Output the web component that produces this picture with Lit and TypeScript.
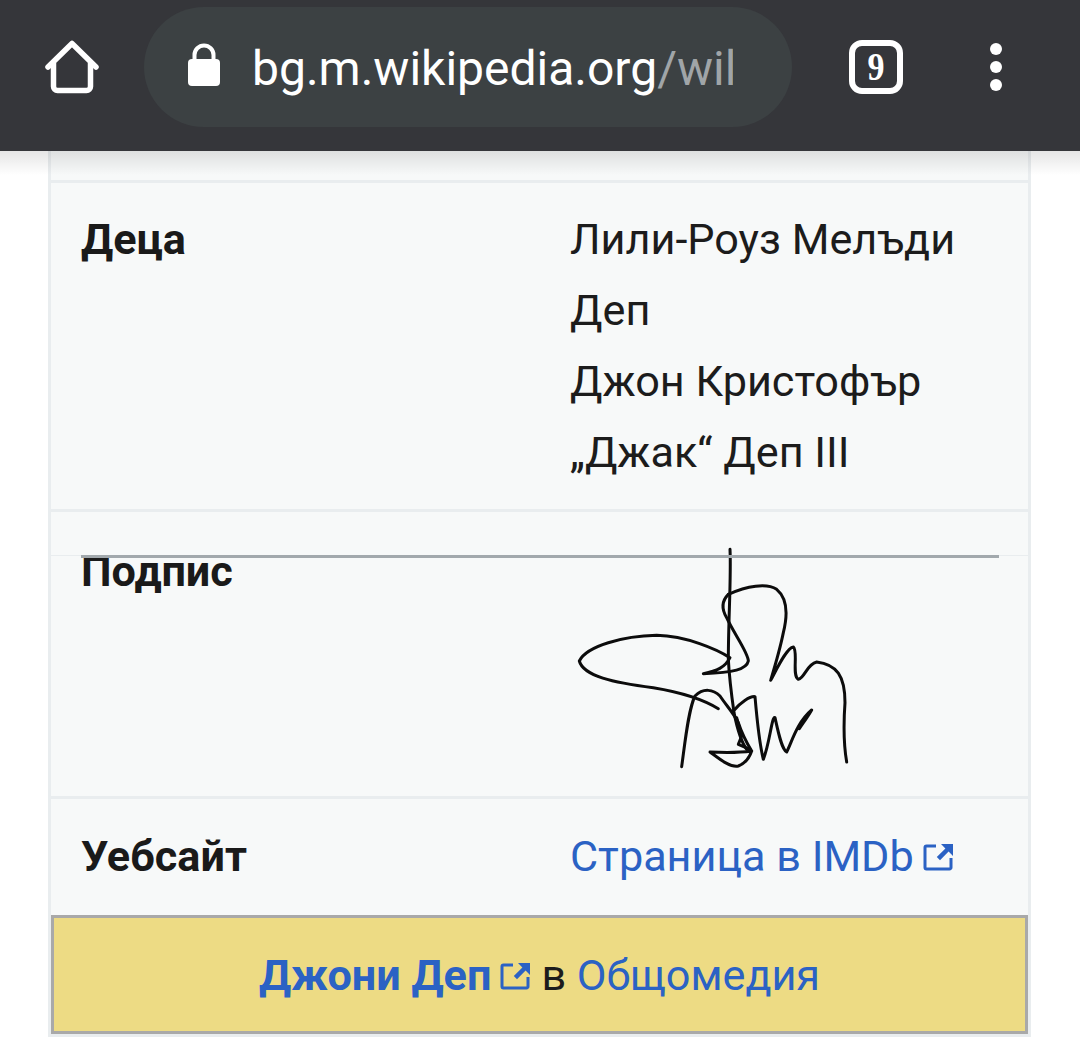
import { LitElement, html, css, svg } from "lit";
import { customElement } from "lit/decorators.js";

const extIcon = svg`<path d="M13 4H3.500A1.500 1.500 0 0 0 2 5.500v20A1.500 1.500 0 0 0 3.500 27h23a1.500 1.500 0 0 0 1.500-1.500V16" fill="none" stroke="currentColor" stroke-width="3"/><path d="M18 2h12v12l-4.400-4.400-8.600 8.600-3.200-3.200 8.600-8.600z" fill="currentColor"/>`;

@customElement("app-root")
export class AppRoot extends LitElement {
  static styles = css`
    :host { display: block; position: relative; width: 1080px; height: 1063px; overflow: hidden; background: #fff; font-family: Roboto, "Noto Sans", sans-serif; color: #1c1c1c; }
    .toolbar { height: 151px; background: #35363a; display: flex; align-items: flex-start; box-sizing: border-box; position: relative; z-index: 2; }
    .home { width: 60px; height: 60px; margin: 38px 0 0 42px; flex: none; }
    .pill { width: 648px; height: 120px; margin: 7px 0 0 42px; flex: none; border-radius: 60px; background: #3c4143; display: flex; align-items: center; box-sizing: border-box; padding: 0 0 2px 44px; }
    .lock { width: 32px; height: 44px; flex: none; margin-bottom: 3px; }
    .url { margin-left: 32px; width: 481px; overflow: hidden; white-space: nowrap; font-size: 48px; color: #fff; line-height: 60px; padding-top: 6px; }
    .url span { color: #a0a5a8; }
    .tabs { width: 54px; height: 54px; box-sizing: border-box; margin: 40px 0 0 57px; border: 6px solid #fff; border-radius: 13px; display: flex; align-items: center; justify-content: center; color: #fff; font: bold 40px/1 "Liberation Serif", serif; flex: none; }
    .tabs span { display: block; transform: scaleX(0.85); }
    .dots { display: flex; flex-direction: column; gap: 6px; margin: 43px 0 0 87px; flex: none; }
    .dots i { display: block; width: 12px; height: 12px; border-radius: 50%; background: #fff; }
    .shade { position: absolute; left: 0; right: 0; top: 151px; height: 24px; background: linear-gradient(rgba(0,0,0,.1), rgba(0,0,0,0)); z-index: 1; pointer-events: none; }
    .box { margin-left: 48px; width: 983px; box-sizing: border-box; border: 3px solid #e9edef; border-top: 0; background: #f7f9f9; position: relative; }
    .row { border-bottom: 3px solid #e9edef; display: grid; grid-template-columns: 489px 429px; padding-left: 30px; font-size: 43.2px; line-height: 71px; }
    .top { height: 29px; padding: 0; }
    .th { font-weight: 700; color: #1a1a1a; }
    .kids { padding-top: 21px; padding-bottom: 21px; }
    .gap { height: 43px; padding: 0; border-bottom: 1px solid #e9edef; }
    .sign { height: 240px; position: relative; }
    .sign .th { line-height: 32px; }
    .rule { position: absolute; left: 30px; width: 918px; top: -1px; height: 3px; background: #a2a9ad; }
    .sig { display: block; width: 310px; height: 245px; margin: -20px 0 0 -10px; position: relative; }
    .site { padding-top: 21px; padding-bottom: 20px; line-height: 73px; height: 115px; box-sizing: border-box; border-bottom: 0; }
    a { color: #2b62c4; text-decoration: none; }
    .ext { display: inline-block; width: 32px; height: 30px; vertical-align: -1px; margin-left: 9px; color: #2b62c4; }
    .commons { box-sizing: border-box; height: 119px; margin-top: 1px; border: 3px solid #a9a9a9; background: #eddb84; text-align: center; font-size: 43.2px; line-height: 115px; color: #1c1c1c; }
    .commons b { font-weight: 700; }
    .commons .ext { margin-left: 9px; margin-right: 9px; }
  `;

  render() {
    return html`
      <div class="toolbar">
        <svg class="home" viewBox="0 0 60 60"><path d="M6 29 30 5.500 54 29" fill="none" stroke="#fff" stroke-width="5.500" stroke-linecap="round" stroke-linejoin="round"/><path d="M11.500 25v23.500a4 4 0 0 0 4 4h29a4 4 0 0 0 4-4V25" fill="none" stroke="#fff" stroke-width="5.500"/></svg>
        <div class="pill">
          <svg class="lock" viewBox="0 0 32 44"><path d="M6.500 18v-6a9.500 9.500 0 0 1 19 0v6" fill="none" stroke="#fff" stroke-width="4"/><rect x="0" y="16" width="32" height="27" rx="4" fill="#fff"/></svg>
          <div class="url">bg.m.wikipedia.org<span>/wil</span></div>
        </div>
        <div class="tabs"><span>9</span></div>
        <div class="dots"><i></i><i></i><i></i></div>
      </div>
      <div class="shade"></div>
      <div class="box">
        <div class="row top"></div>
        <div class="row kids">
          <div class="th">Деца</div>
          <div>Лили-Роуз Мелъди Деп<br />Джон Кристофър „Джак“ Деп III</div>
        </div>
        <div class="row gap"></div>
        <div class="row sign">
          <div class="th">Подпис</div>
          <svg class="sig" viewBox="0 0 930 735" fill="none" stroke="#0c0c0c" stroke-width="9" stroke-linecap="round" stroke-linejoin="round">
            <path d="M510 40C514 120 505 250 505 370C508 430 515 480 522 530C530 570 545 620 560 640" />
            <path d="M505 175C560 150 620 140 650 160C680 185 685 230 670 290C660 340 645 390 632 433C650 400 680 335 700 333C715 345 695 420 715 430C735 425 740 385 770 378C830 385 855 420 855 500C850 570 850 620 860 678" />
            <path d="M505 175C485 195 485 220 500 245C520 290 565 350 565 375C560 400 520 410 430 413C470 405 495 395 510 365C470 340 380 300 290 298C190 300 80 330 58 375C70 420 160 440 280 455C370 470 430 490 475 518" />
            <path d="M365 692C375 620 385 520 405 480C430 455 460 460 480 480C500 510 520 530 535 560C545 590 560 620 575 645C540 650 490 650 450 648C480 670 510 695 535 690C560 680 570 660 575 645" />
            <path d="M520 525C540 500 570 480 585 482C590 540 600 630 610 670C630 620 635 540 645 545C655 590 665 640 680 648C695 620 710 560 755 522C745 540 730 560 718 578" />
            <path d="M530 545L545 600L535 625L570 640" />
          </svg>
          <div class="rule"></div>
        </div>
        <div class="row site">
          <div class="th">Уебсайт</div>
          <div><a>Страница в IMDb<svg class="ext" viewBox="0 0 32 30">${extIcon}</svg></a></div>
        </div>
        <div class="commons"><a><b>Джони Деп</b><svg class="ext" viewBox="0 0 32 30">${extIcon}</svg></a>в <a>Общомедия</a></div>
      </div>
    `;
  }
}
